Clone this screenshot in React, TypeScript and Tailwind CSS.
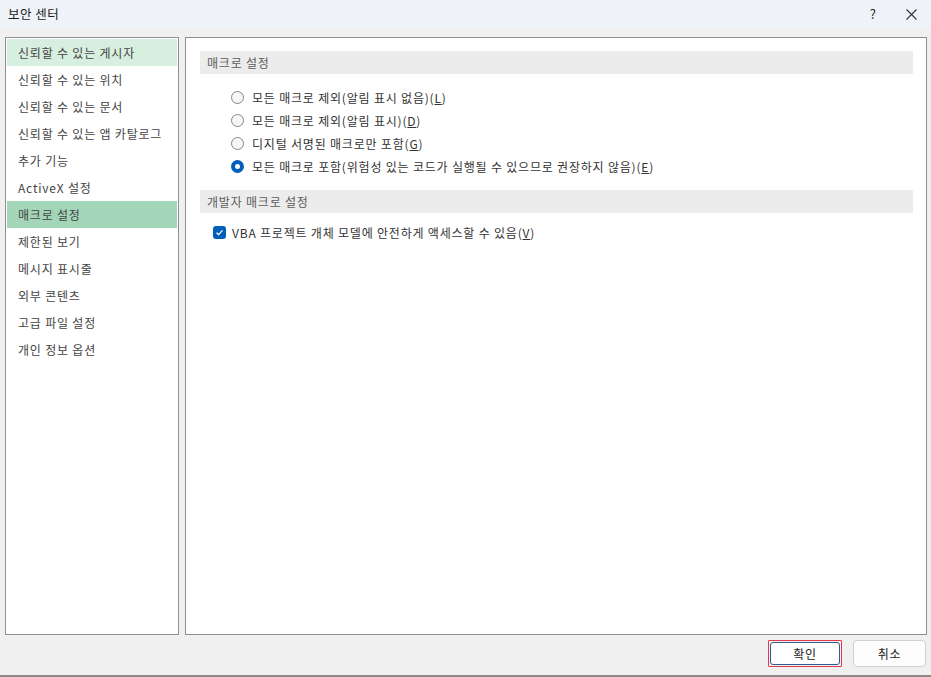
import React from "react";

const font = { fontFamily: '"Noto Sans CJK KR", "Noto Sans", sans-serif' };

const navItems = [
  "신뢰할 수 있는 게시자",
  "신뢰할 수 있는 위치",
  "신뢰할 수 있는 문서",
  "신뢰할 수 있는 앱 카탈로그",
  "추가 기능",
  "ActiveX 설정",
  "매크로 설정",
  "제한된 보기",
  "메시지 표시줄",
  "외부 콘텐츠",
  "고급 파일 설정",
  "개인 정보 옵션",
];

const macroOptions = [
  { label: "모든 매크로 제외(알림 표시 없음)", key: "L", checked: false },
  { label: "모든 매크로 제외(알림 표시)", key: "D", checked: false },
  { label: "디지털 서명된 매크로만 포함", key: "G", checked: false },
  { label: "모든 매크로 포함(위험성 있는 코드가 실행될 수 있으므로 권장하지 않음)", key: "E", checked: true },
];

function Radio({ checked }: { checked: boolean }) {
  if (checked) {
    return (
      <span className="flex h-[13px] w-[13px] shrink-0 items-center justify-center rounded-full bg-[#005fb8]">
        <span className="h-[5px] w-[5px] rounded-full bg-white" />
      </span>
    );
  }
  return <span className="h-[13px] w-[13px] shrink-0 rounded-full border border-[#858585] bg-[#f7f7f7]" />;
}

function SectionHeader({ children }: { children: React.ReactNode }) {
  return (
    <div className="flex h-[23px] items-center bg-[#ececec] pl-[7px] text-[12px] tracking-[0.8px] text-[#5c5c5c]">
      {children}
    </div>
  );
}

export default function App() {
  return (
    <div
      className="flex h-[677px] w-[931px] flex-col overflow-hidden bg-[#f0f0f0] text-[#2b2b2b]"
      style={font}
    >
      <div className="flex h-[28px] shrink-0 items-center justify-between bg-[#eff2f7] pl-[8px] pr-[14px]">
        <span className="text-[12.5px] tracking-[0.5px] text-[#1c1c1c]">보안 센터</span>
        <div className="flex items-center gap-[30px] text-[#222]">
          <span className="text-[13px]">?</span>
          <svg width="11" height="11" viewBox="0 0 11 11" className="mt-[1px]">
            <path d="M0.5 0.5 L10.5 10.5 M10.5 0.5 L0.5 10.5" stroke="#333" strokeWidth="1.1" fill="none" />
          </svg>
        </div>
      </div>

      <div className="flex h-[607px] shrink-0 gap-[6px] pl-[5px] pr-[4px] pt-[9px]">
        <div className="w-[174px] border border-[#8f8f8f] bg-white p-px">
          {navItems.map((item, i) => (
            <div
              key={item}
              className={`flex h-[27px] items-center pl-[11px] text-[12px] tracking-[0.8px] text-[#444] ${
                i === 0 ? "bg-[#d6efdf]" : i === 6 ? "bg-[#a3d6b8]" : ""
              }`}
            >
              {item}
            </div>
          ))}
        </div>

        <div className="flex-1 border border-[#8f8f8f] bg-white pl-[14px] pr-[13px] pt-[13px]">
          <SectionHeader>매크로 설정</SectionHeader>
          <div className="mt-[12px] flex flex-col pl-[31px]">
            {macroOptions.map((opt) => (
              <div
                key={opt.key}
                className="flex h-[23px] items-center gap-[8px] text-[12px] tracking-[0.8px] text-[#333]"
              >
                <Radio checked={opt.checked} />
                <span>
                  {opt.label}(<span className="underline">{opt.key}</span>)
                </span>
              </div>
            ))}
          </div>
          <div className="mt-[12px]">
            <SectionHeader>개발자 매크로 설정</SectionHeader>
          </div>
          <div className="mt-[8px] flex h-[23px] items-center gap-[6px] pl-[13px] text-[12px] tracking-[0.8px] text-[#333]">
            <span className="flex h-[13px] w-[13px] items-center justify-center rounded-[3px] bg-[#005fb8]">
              <svg width="9" height="9" viewBox="0 0 9 9">
                <path d="M1.5 4.7 L3.6 6.6 L7.5 2.4" stroke="white" strokeWidth="1.3" fill="none" />
              </svg>
            </span>
            <span>
              VBA 프로젝트 개체 모델에 안전하게 액세스할 수 있음(<span className="underline">V</span>)
            </span>
          </div>
        </div>
      </div>

      <div className="flex flex-1 items-start justify-end gap-[11px] pr-[5px] pt-[5px]">
        <button className="flex h-[27px] w-[74px] items-center justify-center rounded-[1px] border border-[#e0384f] p-px">
          <span className="flex h-full w-full items-center justify-center rounded-[3px] border border-[#2d5c8f] bg-white text-[12px] tracking-[0.8px] text-[#222]">
            확인
          </span>
        </button>
        <button className="flex h-[27px] w-[73px] items-center justify-center rounded-[4px] border border-[#d0d0d0] bg-[#fdfdfd] text-[12px] tracking-[0.8px] text-[#222]">
          취소
        </button>
      </div>
      <div className="h-[2px] shrink-0 bg-[#8a8a8a]" />
    </div>
  );
}
